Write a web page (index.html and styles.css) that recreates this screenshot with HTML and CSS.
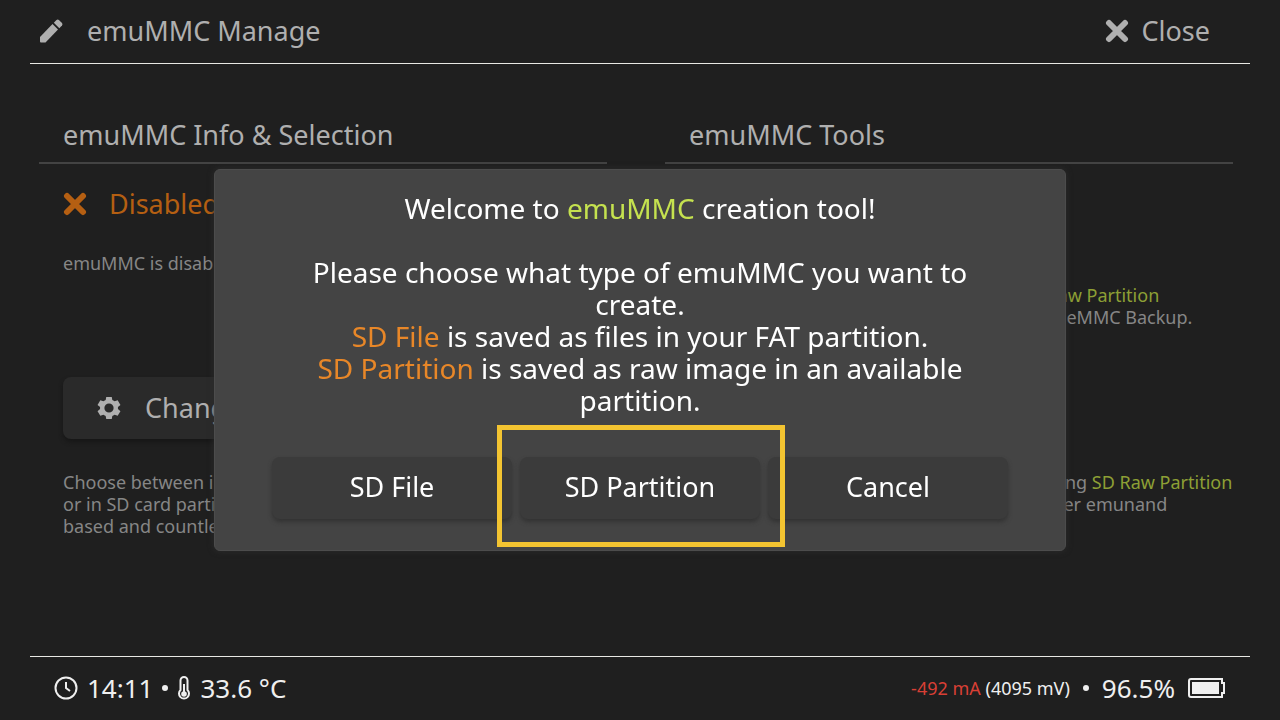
FILE: index.html
```html
<!DOCTYPE html>
<html lang="en">
<head>
<meta charset="utf-8">
<title>emuMMC Manage</title>
<link rel="stylesheet" href="styles.css">
</head>
<body>
<div class="app">
  <header class="bar top">
    <h1 class="title">
      <svg class="icon" viewBox="0 0 24 24" aria-hidden="true"><path d="M1 18 13.500 5 19 10.500 6.500 23.500H2q-1 0-1-1z"/><path d="M14.800 3.700 17.500 1q1.200-1 2.400 0L23 4.100q1 1.200 0 2.400L20.300 9.200z"/></svg>
      <span>emuMMC Manage</span>
    </h1>
    <button class="close" type="button">
      <svg class="icon" viewBox="0 0 24 24" aria-hidden="true"><path class="cross" d="M4 4 20 20M20 4 4 20"/></svg>
      <span>Close</span>
    </button>
  </header>

  <main class="columns">
    <section class="column">
      <h2 class="heading">emuMMC Info &amp; Selection</h2>
      <div class="upper">
        <p class="status">
          <svg class="icon" viewBox="0 0 24 24" aria-hidden="true"><path class="cross" d="M4 4 20 20M20 4 4 20"/></svg>
          <span>Disabled!</span>
        </p>
        <p class="note">emuMMC is disabled.</p>
      </div>
      <button class="change" type="button">
        <svg class="icon" viewBox="-1 0 26 24" aria-hidden="true"><path fill-rule="evenodd" d="M9 0h6l.6 3.300 2.500 1.500 3.300-1.200 3 5.100-2.700 2.200v2.300l2.700 2.200-3 5.100-3.300-1.200-2.500 1.500L15 24H9l-.6-3.200-2.500-1.500-3.300 1.200-3-5.100 2.700-2.200v-2.300L-.4 8.700l3-5.100 3.300 1.200 2.500-1.500zM12 7a5 5 0 1 0 0 10 5 5 0 0 0 0-10z"/></svg>
        <span>Change emuMMC</span>
      </button>
      <p class="note">Choose between images in the folder<br>or in SD card partitions. You can have<br>based and countless file based.</p>
    </section>
    <section class="column">
      <h2 class="heading">emuMMC Tools</h2>
      <div class="upper tools">
        <p class="note">Allows you to create and use <em class="key">SD File</em> or <em class="key">SD Raw Partition</em><br>emuMMC. You can create it from an existing eMMC Backup.</p>
      </div>
      <p class="note lower">Migrate current emuMMC that is existing using <em class="key">SD Raw Partition</em><br>files, and import those which come from other emunand</p>
    </section>
  </main>

  <footer class="bar bottom">
    <div class="group">
      <svg class="icon" viewBox="0 0 24 24" aria-hidden="true"><circle class="line" cx="12" cy="12" r="10.500"/><path class="line" d="M12 6v6l4 3"/></svg>
      <span>14:11</span>
      <i class="dot"></i>
      <svg class="thermo" viewBox="0 0 14 24" aria-hidden="true"><path class="line" d="M3.500 14V4.500a3.500 3.500 0 0 1 7 0V14a5 5 0 1 1-7 0z"/><circle cx="7" cy="18" r="2.800"/><path class="line" d="M7 8v9"/></svg>
      <span>33.6 °C</span>
    </div>
    <div class="group power">
      <span class="small"><span class="current">-492 mA</span> (4095 mV)</span>
      <i class="dot"></i>
      <span>96.5%</span>
      <svg class="battery" viewBox="0 0 38 22" aria-hidden="true"><path class="line" d="M3 2h31v4h2v10h-2v4H3q-2 0-2-2V4q0-2 2-2z"/><path d="M4 5h27v12H4z"/></svg>
    </div>
  </footer>

  <div class="overlay">
    <div class="dialog" role="dialog" aria-modal="true" aria-label="emuMMC creation tool">
      <p class="message">Welcome to <em class="accent">emuMMC</em> creation tool!<br><br>Please choose what type of emuMMC you want to<br>create.<br><em class="orange">SD File</em> is saved as files in your FAT partition.<br><em class="orange">SD Partition</em> is saved as raw image in an available<br>partition.</p>
      <div class="actions">
        <button class="choice" type="button">SD File</button>
        <button class="choice picked" type="button">SD Partition</button>
        <button class="choice" type="button">Cancel</button>
      </div>
    </div>
  </div>
</div>
</body>
</html>
```
FILE: styles.css
```css
* {
  box-sizing: border-box;
}

body {
  margin: 0;
  background: #1f1f1f;
  color: #afafaf;
  font: 27px/32px "Noto Sans", "Open Sans", sans-serif;
}

h1,
h2,
p {
  margin: 0;
  font: inherit;
}

em {
  font-style: normal;
}

button {
  border: 0;
  padding: 0;
  background: none;
  color: inherit;
  font: inherit;
  white-space: nowrap;
}

svg {
  flex: none;
  fill: currentColor;
}

.app {
  display: flex;
  flex-direction: column;
  min-height: 100vh;
}

.bar {
  display: flex;
  align-items: center;
  justify-content: space-between;
  height: 64px;
  margin: 0 30px;
}

.top {
  border-bottom: 1px solid #e8e8e4;
  padding: 0 40px 2px 9px;
}

.bottom {
  border-top: 1px solid #e8e8e4;
  padding: 0 24px 2px;
  color: #efefef;
  font-size: 26px;
}

.icon {
  width: 24px;
  height: 24px;
}

.cross {
  fill: none;
  stroke: currentColor;
  stroke-width: 6;
  stroke-linecap: round;
}

.line {
  fill: none;
  stroke: currentColor;
  stroke-width: 2;
}

.title,
.close,
.status,
.change,
.group {
  display: flex;
  align-items: center;
}

.title {
  gap: 24px;
}

.close {
  gap: 12px;
}

.columns {
  flex: 1;
  display: grid;
  grid-template-columns: 1fr 1fr;
  gap: 58px;
  padding: 47px 47px 0 39px;
}

.column {
  min-width: 0;
  white-space: nowrap;
}

.heading {
  border-bottom: 2px solid #434343;
  padding: 8px 24px 11px;
}

.upper {
  height: 213px;
  padding: 24px 24px 0;
}

.status {
  gap: 22px;
  margin-bottom: 32px;
  color: #b55f12;
}

.note {
  color: #868686;
  font-size: 18px;
  line-height: 22px;
}

.column > .note {
  padding: 32px 24px 0;
}

.tools {
  padding-top: 120px;
}

.column > .lower {
  padding-top: 94px;
}

.key {
  color: #8d9f35;
}

.change {
  gap: 24px;
  width: 504px;
  height: 62px;
  margin: 0 24px;
  border-radius: 8px;
  padding: 0 34px;
  background: #2a2a2a;
  box-shadow: 0 3px 4px #171717;
}

.group {
  gap: 9px;
}

.power {
  gap: 13px;
}

.dot {
  width: 6px;
  height: 6px;
  border-radius: 50%;
  background: currentColor;
}

.thermo {
  width: 14px;
  height: 24px;
}

.battery {
  width: 38px;
  height: 22px;
}

.small {
  font-size: 18px;
}

.current {
  color: #d93f35;
}

.overlay {
  position: fixed;
  inset: 0;
  display: grid;
  place-items: center;
}

.dialog {
  width: 852px;
  max-width: 100%;
  border: 1px solid #4c4c4c;
  border-radius: 6px;
  padding: 22px 16px 31px;
  background: #444;
  box-shadow: 0 0 6px #2d2d2d;
  color: #fff;
}

.message {
  margin-bottom: 41px;
  font-size: 28px;
  text-align: center;
}

.actions {
  display: grid;
  grid-template-columns: repeat(3, 1fr);
  gap: 8px;
  margin: 0 41px;
}

.accent {
  color: #c5e24f;
}

.orange {
  color: #e88728;
}

.choice {
  height: 62px;
  border-radius: 8px;
  padding-bottom: 2px;
  background: #3b3b3b;
  box-shadow: 0 3px 4px #333;
}

.picked {
  position: relative;
}

.picked::after {
  content: "";
  position: absolute;
  z-index: 1;
  inset: -32px -25px -28px -23px;
  border: 5px solid #f3c431;
}
```
